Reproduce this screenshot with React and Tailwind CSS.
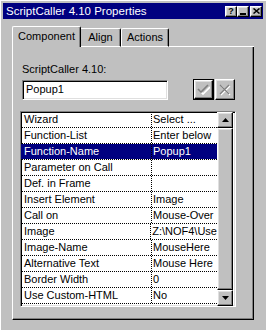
const rows = [
  ["Wizard", "Select ..."],
  ["Function-List", "Enter below"],
  ["Function-Name", "Popup1"],
  ["Parameter on Call", ""],
  ["Def. in Frame", ""],
  ["Insert Element", "Image"],
  ["Call on", "Mouse-Over"],
  ["Image", "Z:\\NOF4\\Use"],
  ["Image-Name", "MouseHere"],
  ["Alternative Text", "Mouse Here"],
  ["Border Width", "0"],
  ["Use Custom-HTML", "No"],
];

const raised =
  "border border-t-white border-l-white border-r-black border-b-black shadow-[inset_-1px_-1px_0_#808080,inset_1px_1px_0_#dfdfdf] bg-[#c0c0c0]";
const sunken =
  "border border-t-[#808080] border-l-[#808080] border-r-white border-b-white shadow-[inset_1px_1px_0_#000,inset_-1px_-1px_0_#dfdfdf]";

const TitleButton = ({ children, className = "" }) => (
  <div className={`w-[12px] h-[11px] flex items-center justify-center ${raised} ${className}`}>
    {children}
  </div>
);

const App = () => {
  return (
    <div className="w-[266px] h-[330px] bg-[#c0c0c0] border-l border-t border-l-white border-t-white pt-[2px] pl-[2px] pr-[3px] font-['Liberation_Sans',Arial,sans-serif] text-[11px] leading-[13px] text-black overflow-hidden">
      {/* Title bar */}
      <div className="h-[16px] bg-[#000080] flex items-center pl-[3px] pr-[1px] text-white">
        <span className="flex-1 text-[11.5px]">ScriptCaller 4.10 Properties</span>
        <TitleButton>
          <span className="text-[9px] leading-[9px] font-bold text-black">?</span>
        </TitleButton>
        <TitleButton>
          <svg width="6" height="7" viewBox="0 0 6 7">
            <rect x="0" y="5" width="6" height="2" fill="#000" />
          </svg>
        </TitleButton>
        <TitleButton className="ml-[1px]">
          <svg width="7" height="6" viewBox="0 0 7 6">
            <path d="M0.5 0.5 L6.5 5.5 M6.5 0.5 L0.5 5.5" stroke="#000" strokeWidth="1.5" />
          </svg>
        </TitleButton>
      </div>

      <div className="pl-[9px] pt-[7px]">
        {/* Tabs */}
        <div className="flex items-end h-[21px] w-[242px]">
          <div className="w-[69px] h-[21px] border-l border-t border-r border-l-white border-t-white border-r-black rounded-t-[2px] shadow-[inset_-1px_0_0_#808080] flex items-center justify-center pb-[1px]">
            Component
          </div>
          <div className="w-[40px] h-[19px] border-t border-r border-b border-t-white border-r-black border-b-white rounded-tr-[2px] shadow-[inset_-1px_0_0_#808080] flex items-center justify-center">
            Align
          </div>
          <div className="w-[48px] h-[19px] border-l border-t border-r border-b border-l-white border-t-white border-r-black border-b-white rounded-t-[2px] shadow-[inset_-1px_0_0_#808080] flex items-center justify-center">
            Actions
          </div>
          <div className="flex-1 border-b border-b-white" />
        </div>

        {/* Panel */}
        <div className="w-[242px] h-[273px] border-l border-r border-b border-l-white border-r-black border-b-black shadow-[inset_-1px_-1px_0_#808080] pt-[16px]">
          <div className="pl-[9px]">ScriptCaller 4.10:</div>

          <div className="flex items-center mt-[3px] pl-[9px]">
            <div className={`w-[146px] h-[20px] bg-white flex items-center pl-[3px] ${sunken}`}>
              Popup1
            </div>
            <div className="ml-[25px] w-[21px] h-[21px] border border-black">
              <div className={`w-full h-full flex items-center justify-center ${raised}`}>
                <svg width="13" height="11" viewBox="0 0 13 11">
                  <path d="M2 6 L5 9 L12 2" stroke="#fff" strokeWidth="1.6" fill="none" transform="translate(1 1)" />
                  <path d="M1 5 L4 8 L11 1" stroke="#808080" strokeWidth="1.6" fill="none" />
                </svg>
              </div>
            </div>
            <div className={`ml-[1px] w-[20px] h-[21px] flex items-center justify-center ${raised}`}>
              <svg width="12" height="12" viewBox="0 0 12 12">
                <path d="M2 2 L11 11 M11 2 L2 11" stroke="#fff" strokeWidth="1.2" fill="none" />
                <path d="M1 1 L10 10 M10 1 L1 10" stroke="#808080" strokeWidth="1.2" fill="none" />
              </svg>
            </div>
          </div>

          {/* Property grid */}
          <div className={`ml-[7px] mt-[11px] w-[216px] h-[196px] bg-white flex ${sunken}`}>
            <div className="w-[196px]">
              {rows.map(([name, value], i) => {
                const sel = i === 2;
                return (
                  <div
                    key={name}
                    className="flex h-[16px] border-b border-dotted border-b-black"
                  >
                    <div
                      className={`w-[131px] pl-[2px] flex items-center border-r border-dotted border-r-black ${sel ? "bg-[#000080] text-white" : ""}`}
                    >
                      <span className="pl-[1px]">{name}</span>
                    </div>
                    <div
                      className={`flex-1 pl-[1px] flex items-center whitespace-nowrap ${sel ? "bg-[#000080] text-white" : ""}`}
                    >
                      {value}
                    </div>
                  </div>
                );
              })}
            </div>

            {/* Scrollbar */}
            <div className="w-[16px] flex flex-col">
              <div className={`h-[16px] flex items-center justify-center ${raised}`}>
                <svg width="7" height="4" viewBox="0 0 7 4">
                  <path d="M3.5 0 L7 4 L0 4 Z" fill="#000" />
                </svg>
              </div>
              <div className={`flex-1 ${raised}`} />
              <div className={`h-[16px] flex items-center justify-center ${raised}`}>
                <svg width="7" height="4" viewBox="0 0 7 4">
                  <path d="M0 0 L7 0 L3.5 4 Z" fill="#000" />
                </svg>
              </div>
            </div>
          </div>
        </div>
      </div>
    </div>
  );
};

export default App;
